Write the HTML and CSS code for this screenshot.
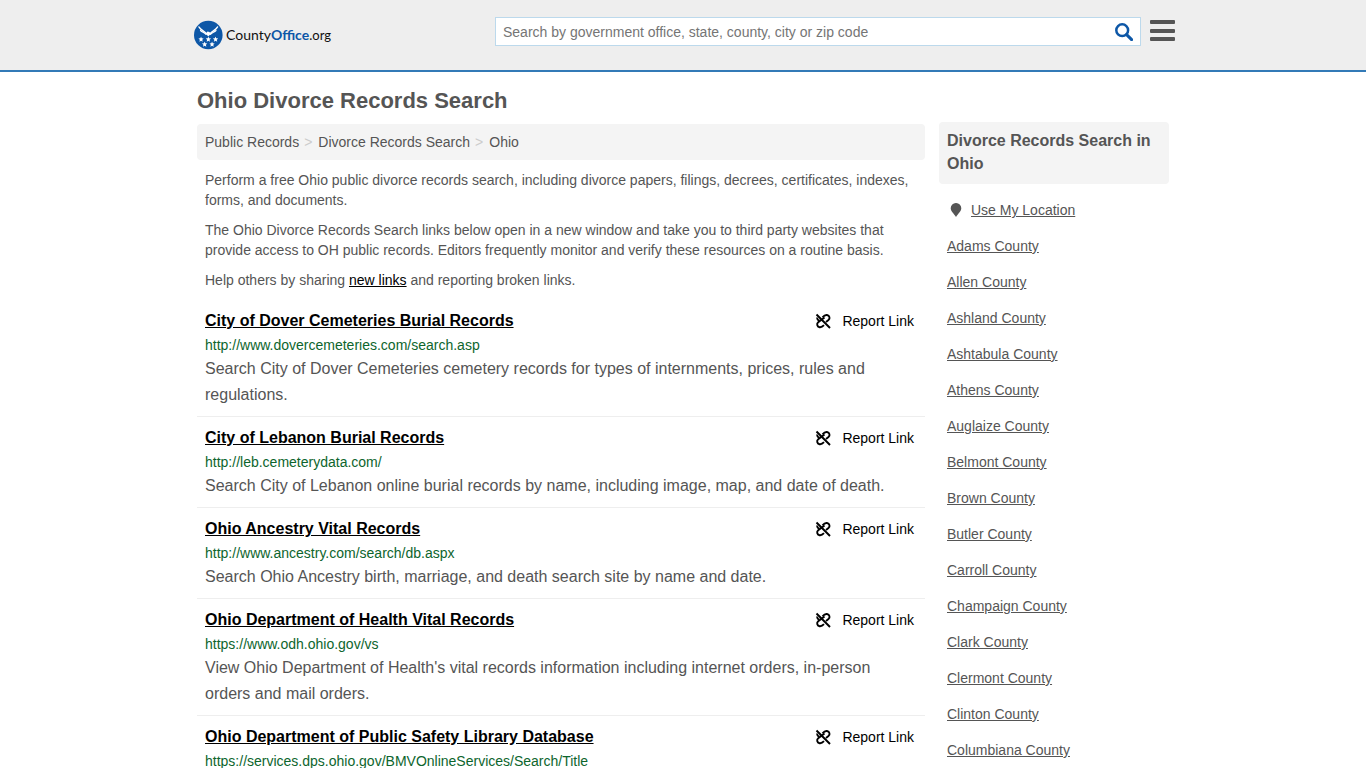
FILE: index.html
```html
<!DOCTYPE html>
<html lang="en">
<head>
<meta charset="utf-8">
<meta name="viewport" content="width=device-width, initial-scale=1">
<title>Ohio Divorce Records Search</title>
<link rel="stylesheet" href="styles.css">
</head>
<body>
<svg class="sprite" aria-hidden="true">
  <symbol id="broken-link" viewBox="0 0 16 16">
    <g fill="none" stroke="currentColor" stroke-width="1.9">
      <path d="M1.500 1.500 15 15"/>
      <path d="M7.500 4.300C9 2.500 10.500 1.800 12 2c2.700.4 3.300 3.600 1.500 5L11 9"/>
      <path d="M9 12.200C7.500 13.800 6 14.500 4.500 14.200 2 13.700 1.400 10.700 3.200 9.200L9.500 4.500"/>
      <path d="M2.300 4.500C2 6 2.800 7.200 4.500 7.500"/>
    </g>
  </symbol>
  <symbol id="star" viewBox="0 0 10 10">
    <path fill="#fff" d="M5 0 6.300 3.400 10 3.600 7.100 5.900 8.100 9.500 5 7.500 1.900 9.500 2.900 5.900 0 3.600 3.700 3.400z"/>
  </symbol>
</svg>
<header class="site-header">
  <div class="header-inner">
    <a class="logo" href="#">
      <svg class="logo-mark" viewBox="0 0 30 30" aria-hidden="true">
        <circle cx="15.300" cy="15" r="14.300" fill="#0d57a7"/>
        <g fill="none" stroke="#fff" stroke-linecap="round">
          <path stroke-width="1.500" d="M6 7c1.800 3.200 4.800 3.500 7.500 6.700M24.500 7c-1.800 3.200-4.800 3.500-7.500 6.700"/>
          <path stroke-width="1.200" d="M7.500 10.500c1.800 1.700 3.600 1.900 5.500 3.800M23 10.500c-1.800 1.700-3.600 1.900-5.500 3.800"/>
        </g>
        <path fill="#fff" d="M12.800 13.500 14.500 11.500l2 .5 1.200 2-2.500 2.500z"/>
        <use href="#star" x="5.300" y="16.500" width="5.500" height="5.500"/>
        <use href="#star" x="12.600" y="16.500" width="5.500" height="5.500"/>
        <use href="#star" x="19.800" y="16.500" width="5.500" height="5.500"/>
        <use href="#star" x="8.900" y="21.500" width="5.500" height="5.500"/>
        <use href="#star" x="16.300" y="21.500" width="5.500" height="5.500"/>
      </svg>
      <span class="logo-text">County<b>Office</b><span class="logo-tld">.org</span></span>
    </a>
    <form class="search" role="search">
      <input class="search-input" type="text" aria-label="Search" placeholder="Search by government office, state, county, city or zip code">
      <button class="search-button" type="button" aria-label="Search">
        <svg class="search-icon" viewBox="0 0 18 18" aria-hidden="true"><circle cx="7.200" cy="7.200" r="5.900" fill="none" stroke="#0d57a7" stroke-width="2.500"/><path d="m11.600 11.600 5 5" stroke="#0d57a7" stroke-width="3" stroke-linecap="round"/></svg>
      </button>
    </form>
    <button class="menu-button" type="button" aria-label="Menu">
      <svg class="menu-icon" viewBox="0 0 25 22" aria-hidden="true"><g fill="#555"><rect width="25" height="4" rx="1"/><rect y="9" width="25" height="4" rx="1"/><rect y="17" width="25" height="4" rx="1"/></g></svg>
    </button>
  </div>
</header>
<div class="page">
  <main class="content">
    <h1 class="page-title">Ohio Divorce Records Search</h1>
    <nav class="breadcrumb" aria-label="Breadcrumb">
      <a href="#">Public Records</a><span class="sep">&gt;</span><a href="#">Divorce Records Search</a><span class="sep">&gt;</span><a href="#">Ohio</a>
    </nav>
    <div class="intro">
      <p>Perform a free Ohio public divorce records search, including divorce papers, filings, decrees, certificates, indexes, forms, and documents.</p>
      <p>The Ohio Divorce Records Search links below open in a new window and take you to third party websites that provide access to OH public records. Editors frequently monitor and verify these resources on a routine basis.</p>
      <p>Help others by sharing <a href="#">new links</a> and reporting broken links.</p>
    </div>
    <article class="record">
      <div class="record-head"><h2 class="record-title"><a href="#">City of Dover Cemeteries Burial Records</a></h2><a class="report" href="#"><svg class="report-icon" aria-hidden="true"><use href="#broken-link"/></svg>Report Link</a></div>
      <p class="record-url">http://www.dovercemeteries.com/search.asp</p>
      <p class="record-text">Search City of Dover Cemeteries cemetery records for types of internments, prices, rules and regulations.</p>
    </article>
    <article class="record">
      <div class="record-head"><h2 class="record-title"><a href="#">City of Lebanon Burial Records</a></h2><a class="report" href="#"><svg class="report-icon" aria-hidden="true"><use href="#broken-link"/></svg>Report Link</a></div>
      <p class="record-url">http://leb.cemeterydata.com/</p>
      <p class="record-text">Search City of Lebanon online burial records by name, including image, map, and date of death.</p>
    </article>
    <article class="record">
      <div class="record-head"><h2 class="record-title"><a href="#">Ohio Ancestry Vital Records</a></h2><a class="report" href="#"><svg class="report-icon" aria-hidden="true"><use href="#broken-link"/></svg>Report Link</a></div>
      <p class="record-url">http://www.ancestry.com/search/db.aspx</p>
      <p class="record-text">Search Ohio Ancestry birth, marriage, and death search site by name and date.</p>
    </article>
    <article class="record">
      <div class="record-head"><h2 class="record-title"><a href="#">Ohio Department of Health Vital Records</a></h2><a class="report" href="#"><svg class="report-icon" aria-hidden="true"><use href="#broken-link"/></svg>Report Link</a></div>
      <p class="record-url">https://www.odh.ohio.gov/vs</p>
      <p class="record-text">View Ohio Department of Health's vital records information including internet orders, in-person orders and mail orders.</p>
    </article>
    <article class="record">
      <div class="record-head"><h2 class="record-title"><a href="#">Ohio Department of Public Safety Library Database</a></h2><a class="report" href="#"><svg class="report-icon" aria-hidden="true"><use href="#broken-link"/></svg>Report Link</a></div>
      <p class="record-url">https://services.dps.ohio.gov/BMVOnlineServices/Search/Title</p>
    </article>
  </main>
  <aside class="sidebar">
    <h2 class="sidebar-title">Divorce Records Search in Ohio</h2>
    <ul class="counties">
      <li class="locate"><svg class="pin" viewBox="0 0 12 14" aria-hidden="true"><path fill="#555" d="M6 0a5.200 5.200 0 0 1 5.300 5.200C11.300 8.300 8 10.500 6 14 4 10.500.7 8.300.7 5.200A5.200 5.200 0 0 1 6 0z"/></svg><a href="#">Use My Location</a></li>
      <li><a href="#">Adams County</a></li>
      <li><a href="#">Allen County</a></li>
      <li><a href="#">Ashland County</a></li>
      <li><a href="#">Ashtabula County</a></li>
      <li><a href="#">Athens County</a></li>
      <li><a href="#">Auglaize County</a></li>
      <li><a href="#">Belmont County</a></li>
      <li><a href="#">Brown County</a></li>
      <li><a href="#">Butler County</a></li>
      <li><a href="#">Carroll County</a></li>
      <li><a href="#">Champaign County</a></li>
      <li><a href="#">Clark County</a></li>
      <li><a href="#">Clermont County</a></li>
      <li><a href="#">Clinton County</a></li>
      <li><a href="#">Columbiana County</a></li>
    </ul>
  </aside>
</div>
</body>
</html>
```
FILE: styles.css
```css
* { box-sizing: border-box; }
body {
  margin: 0;
  background: #fff;
  color: #555;
  font: 14px/20px "Liberation Sans", Arial, sans-serif;
}
h1, h2, p, ul { margin: 0; padding: 0; }
a { color: inherit; }
button { border: 0; padding: 0; background: none; cursor: pointer; }
.sprite { display: block; width: 0; height: 0; }

.site-header { background: #eee; border-bottom: 2px solid #337ab7; }
.header-inner {
  display: flex;
  align-items: flex-start;
  max-width: 984px;
  height: 70px;
  margin: 0 auto;
  padding: 17px 0 0 2px;
}
.logo {
  display: flex;
  align-items: center;
  gap: 3px;
  width: 302px;
  padding-top: 3px;
  color: #111;
  text-decoration: none;
}
.logo-mark { width: 30px; height: 30px; }
.logo-text { font: 14px/20px Lato, sans-serif; }
.logo-text b { color: #0d57a7; }
.logo-tld { font-size: 13px; }
.search {
  display: flex;
  flex: 1;
  height: 29px;
  background: #fff;
  border: 1px solid #bcd9ec;
}
.search-input {
  flex: 1;
  min-width: 0;
  padding: 0 7px;
  border: 0;
  background: none;
  font: inherit;
  outline: 0;
}
.search-input::placeholder { color: #757575; opacity: 1; }
.search-button { width: 32px; }
.search-icon { display: block; width: 18px; height: 18px; margin: 0 auto; }
.menu-button { width: 25px; margin: 3px 0 0 9px; flex: none; }
.menu-icon { display: block; width: 25px; height: 22px; }

.page {
  display: flex;
  align-items: flex-start;
  gap: 14px;
  max-width: 980px;
  margin: 0 auto;
  padding: 0 4px;
}
.content { flex: 1; min-width: 0; }
.page-title { padding: 14px 0 8px; font-size: 22px; line-height: 30px; }
.breadcrumb {
  padding: 8px;
  background: #f4f4f4;
  border-radius: 4px;
}
.breadcrumb a { text-decoration: none; }
.sep { padding: 0 6px 0 5px; color: #ccc; }
.intro { padding: 10px 8px; }
.intro p + p { margin-top: 10px; }
.intro a { color: #000; }
.record { padding: 9px 8px 8px; border-bottom: 1px solid #eee; }
.record-head {
  display: flex;
  justify-content: space-between;
  align-items: center;
  margin-bottom: 2px;
  color: #000;
}
.record-title { font-size: 16px; line-height: 24px; }
.report {
  display: flex;
  align-items: center;
  gap: 11px;
  padding-right: 3px;
  text-decoration: none;
}
.report-icon { width: 16px; height: 16px; }
.record-url { color: #0d652d; }
.record-text { padding-top: 1px; font-size: 16px; line-height: 26px; }

.sidebar { width: 230px; flex: none; padding-top: 50px; }
.sidebar-title {
  padding: 7px 8px 9px;
  background: #f4f4f4;
  border-radius: 4px;
  font-size: 16px;
  line-height: 23px;
}
.counties { padding: 8px 8px 0; list-style: none; line-height: 36px; }
.locate { display: flex; align-items: center; gap: 9px; padding-left: 3px; }
.pin { width: 12px; height: 14px; }
```
